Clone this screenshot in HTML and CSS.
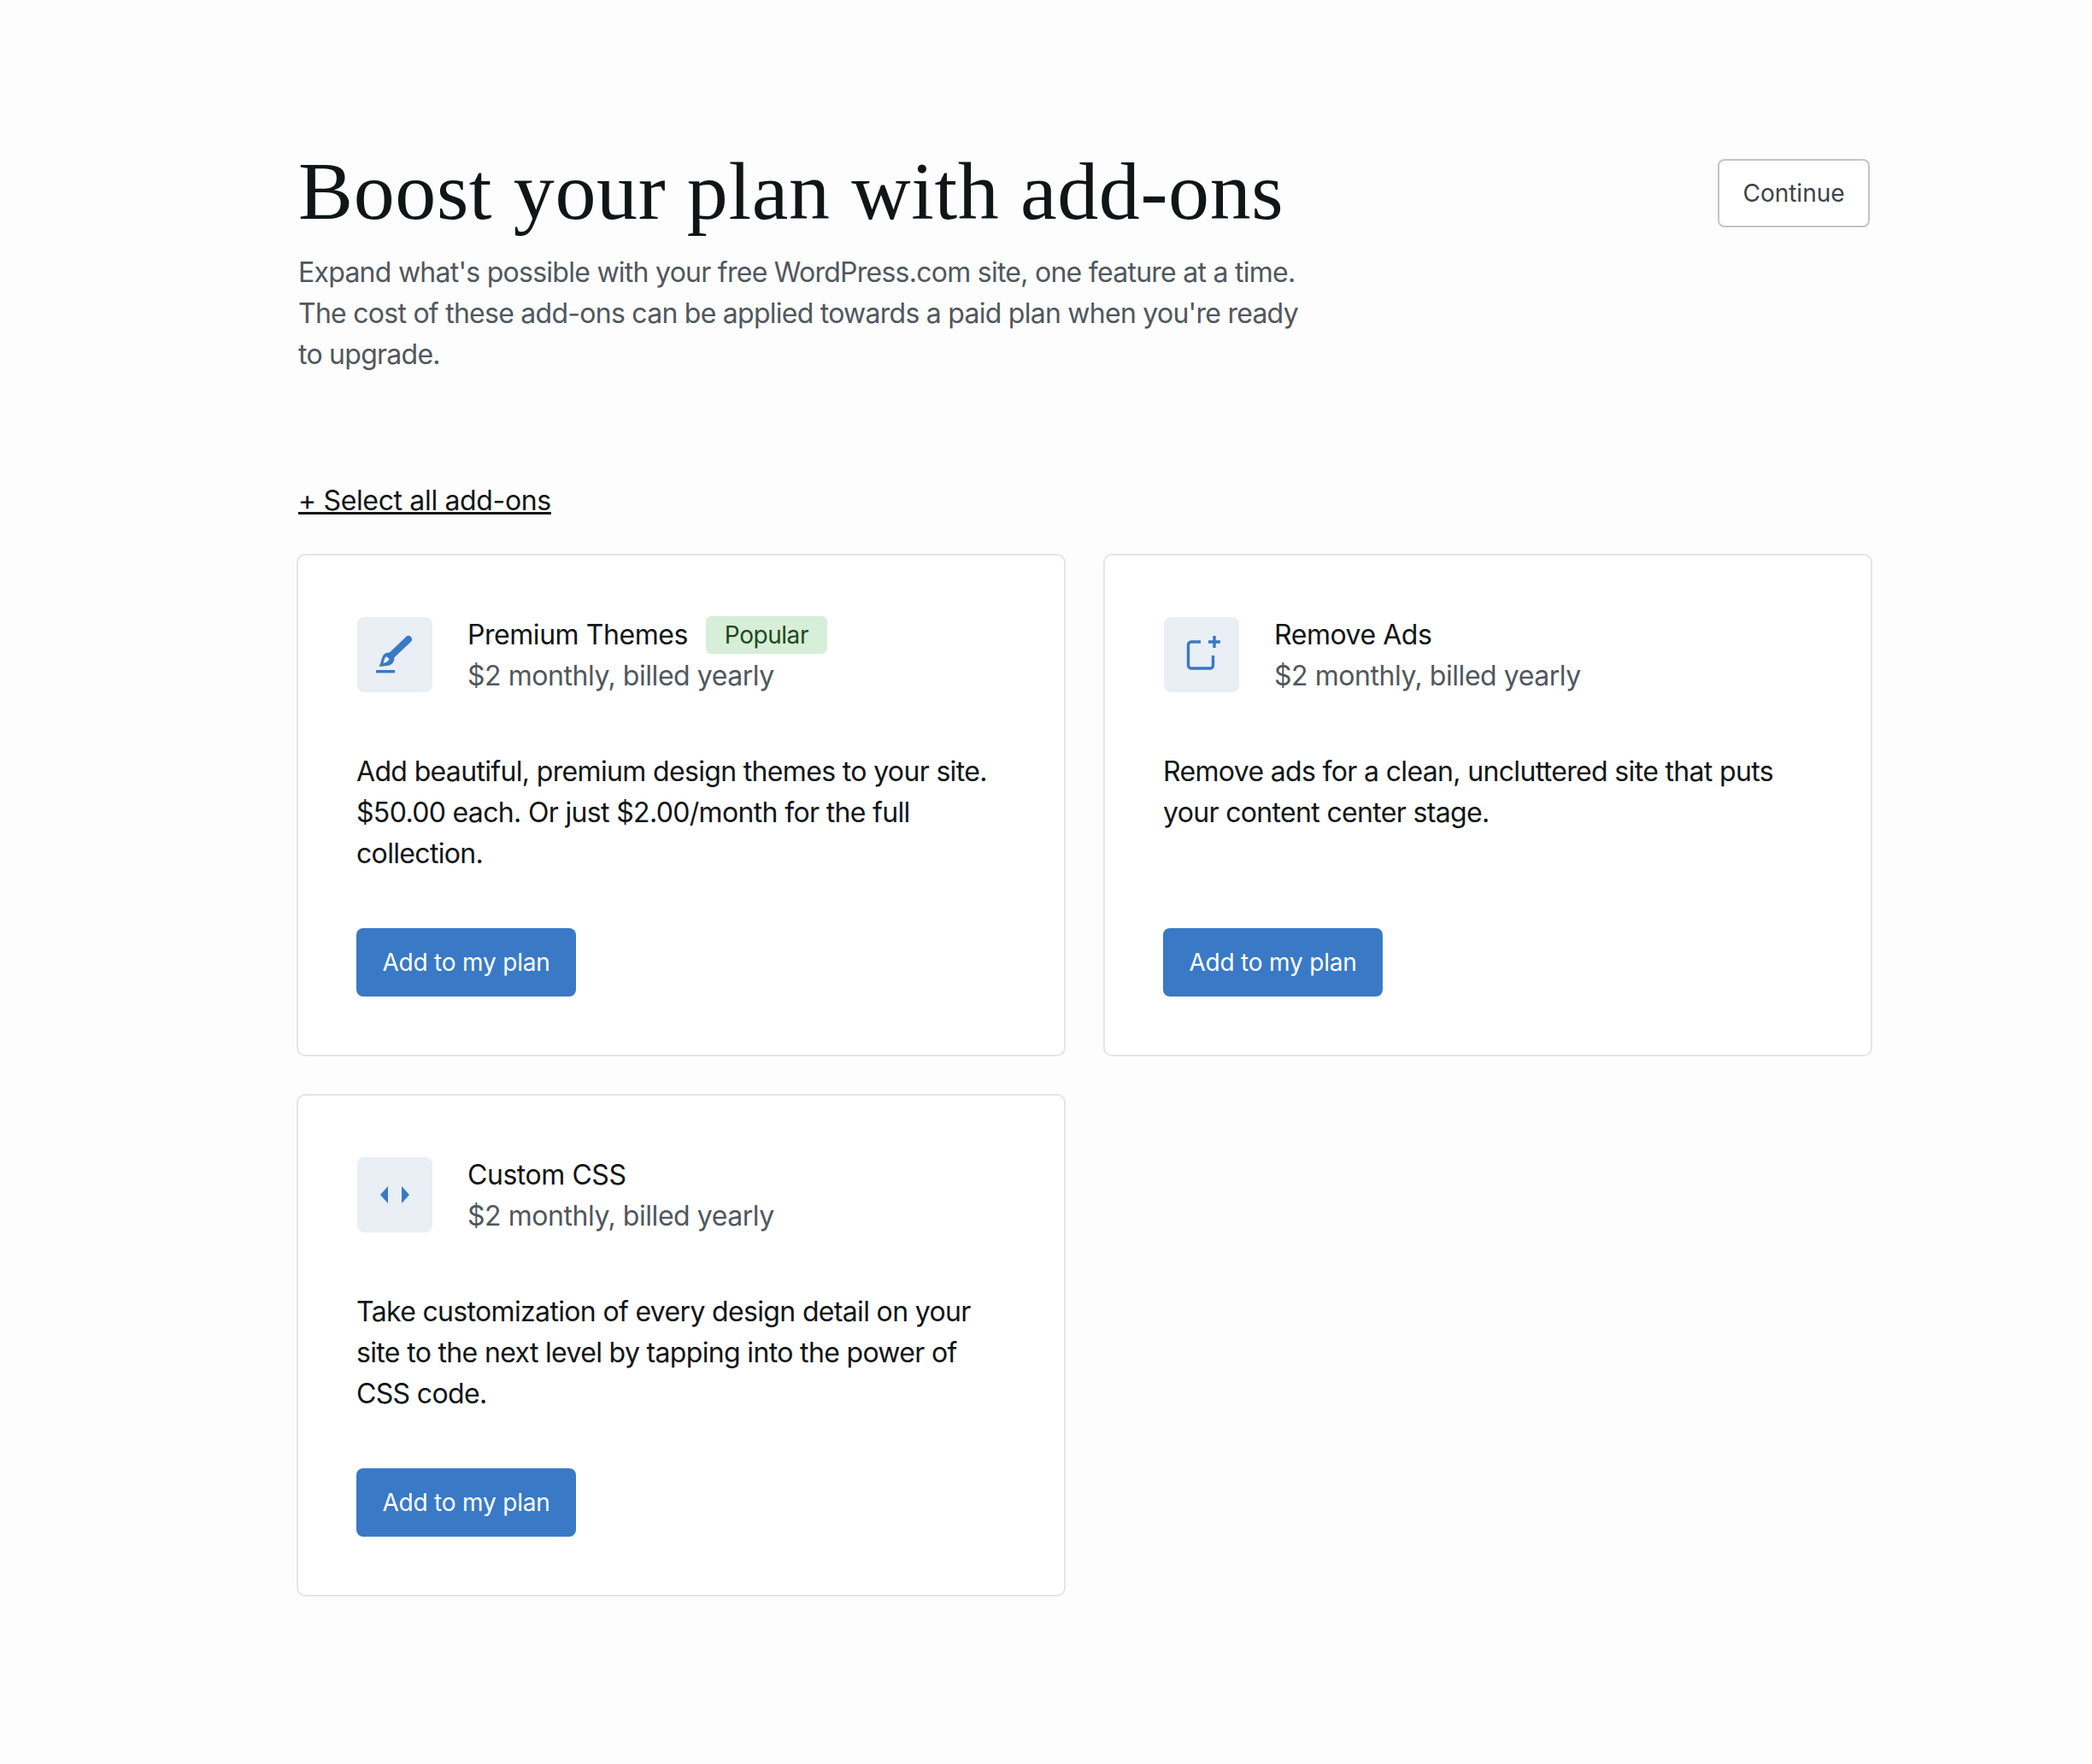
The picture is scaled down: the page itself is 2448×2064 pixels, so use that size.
FILE: index.html
```html
<!DOCTYPE html>
<html lang="en">
  <head>
    <meta charset="UTF-8" />
    <title>Boost your plan with add-ons</title>
    <link rel="stylesheet" href="styles.css">
  </head>
  <body>
    <main class="page">
      <header class="page-header">
        <div class="intro">
          <h1>Boost your plan with add-ons</h1>
          <p>Expand what's possible with your free WordPress.com site, one feature at a time. The cost of these add-ons can be applied towards a paid plan when you're ready to upgrade.</p>
        </div>
        <button class="continue-btn">Continue</button>
      </header>

      <a class="select-all" href="#">+ Select all add-ons</a>

      <section class="cards">
        <article class="card">
          <div class="card-head">
            <div class="icon-box">
              <svg viewBox="0 0 88 88" width="88" height="88">
                <path class="icon-fill" d="M25.5 58 C28 54 28.5 47 31 44 C32.5 42.3 35 41.5 37 41.5 L43.5 48 C43.5 51 42 54 39.5 55.5 C36 57.5 30 57.5 25.5 58 Z" />
                <path class="icon-hole" d="M30.5 54 C31.5 50.5 32 47.5 34 46 L37.5 49 C36.5 51.5 34 53.5 30.5 54 Z" />
                <line class="icon-stroke handle" x1="60" y1="26" x2="40" y2="45" />
                <rect class="icon-fill" x="22" y="62" width="22" height="3.4" />
              </svg>
            </div>
            <div class="card-title">
              <div class="name-row"><span class="name">Premium Themes</span><span class="badge">Popular</span></div>
              <div class="price">$2 monthly, billed yearly</div>
            </div>
          </div>
          <p class="desc">Add beautiful, premium design themes to your site. $50.00 each. Or just $2.00/month for the full collection.</p>
          <button class="add-btn">Add to my plan</button>
        </article>

        <article class="card">
          <div class="card-head">
            <div class="icon-box">
              <svg viewBox="0 0 88 88" width="88" height="88">
                <path class="icon-stroke" d="M43 29 H32 a3.5 3.5 0 0 0 -3.5 3.5 V56.5 a3.5 3.5 0 0 0 3.5 3.5 H54 a3.5 3.5 0 0 0 3.5 -3.5 V45" />
                <path class="icon-stroke" d="M52 29 H66 M59 22 V36" />
              </svg>
            </div>
            <div class="card-title">
              <div class="name-row"><span class="name">Remove Ads</span></div>
              <div class="price">$2 monthly, billed yearly</div>
            </div>
          </div>
          <p class="desc">Remove ads for a clean, uncluttered site that puts your content center stage.</p>
          <button class="add-btn">Add to my plan</button>
        </article>

        <article class="card">
          <div class="card-head">
            <div class="icon-box">
              <svg viewBox="0 0 88 88" width="88" height="88">
                <polygon class="icon-fill" points="36,34 36,54 27,44" />
                <polygon class="icon-fill" points="52,34 52,54 61,44" />
              </svg>
            </div>
            <div class="card-title">
              <div class="name-row"><span class="name">Custom CSS</span></div>
              <div class="price">$2 monthly, billed yearly</div>
            </div>
          </div>
          <p class="desc">Take customization of every design detail on your site to the next level by tapping into the power of CSS code.</p>
          <button class="add-btn">Add to my plan</button>
        </article>
      </section>
    </main>
  </body>
</html>
```
FILE: styles.css
```css
body {
  margin: 0;
  background-color: #fdfdfd;
  font-family: Inter, "Liberation Sans", sans-serif;
  color: #101517;
  letter-spacing: -0.45px;
}
.page {
  padding: 164px 257px 196px 347px;
}
.page-header {
  display: flex;
  justify-content: space-between;
  align-items: flex-start;
}
.intro {
  width: 1200px;
  margin-left: 2px;
}
h1 {
  margin: 0;
  font-family: "Liberation Serif", serif;
  font-weight: 400;
  font-size: 96px;
  line-height: 120px;
  letter-spacing: 0.62px;
  color: #101517;
}
.intro p {
  margin: 11px 0 0;
  font-size: 32px;
  line-height: 48px;
  letter-spacing: -0.74px;
  color: #50575e;
}
.continue-btn {
  margin: 22px 3px 0 0;
  width: 178px;
  height: 80px;
  background-color: #fff;
  border: 2px solid #c3c4c7;
  border-radius: 8px;
  font-family: inherit;
  font-size: 28px;
  letter-spacing: 0;
  color: #3c434a;
}
.select-all {
  display: block;
  margin: 123px 0 0 2px;
  width: fit-content;
  font-size: 32px;
  line-height: 48px;
  letter-spacing: -0.35px;
  color: #101517;
}
.cards {
  display: grid;
  grid-template-columns: 1fr 1fr;
  gap: 44px;
  margin-top: 38px;
}
.card {
  background-color: #fff;
  border: 2px solid #e5e5e5;
  border-radius: 10px;
  padding: 72px 68px 68px;
}
.card-head {
  display: flex;
  gap: 41px;
}
.icon-box {
  width: 88px;
  height: 88px;
  margin-left: 1px;
  flex-shrink: 0;
  background-color: #e9eff5;
  border-radius: 8px;
}
.icon-box svg {
  display: block;
}
.icon-fill {
  fill: #3979c5;
}
.icon-hole {
  fill: #e9eff5;
}
.icon-stroke {
  fill: none;
  stroke: #3979c5;
  stroke-width: 3.4;
}
.handle {
  stroke-width: 8;
  stroke-linecap: round;
}
.card-title {
  margin-top: -3px;
  font-size: 32px;
  line-height: 48px;
}
.name-row {
  display: flex;
  align-items: center;
  gap: 21px;
}
.badge {
  background-color: #d7eed9;
  color: #1c4a1a;
  border-radius: 6px;
  padding: 0 22px;
  font-size: 28px;
  line-height: 44px;
}
.price {
  color: #50575e;
}
.desc {
  margin: 64px 0 0;
  min-height: 144px;
  font-size: 32px;
  line-height: 48px;
  letter-spacing: -0.66px;
  color: #101517;
}
.add-btn {
  display: block;
  margin-top: 63px;
  width: 257px;
  height: 80px;
  background-color: #3979c5;
  border: none;
  border-radius: 8px;
  font-family: inherit;
  font-size: 28px;
  letter-spacing: -0.2px;
  color: #fff;
}
```
